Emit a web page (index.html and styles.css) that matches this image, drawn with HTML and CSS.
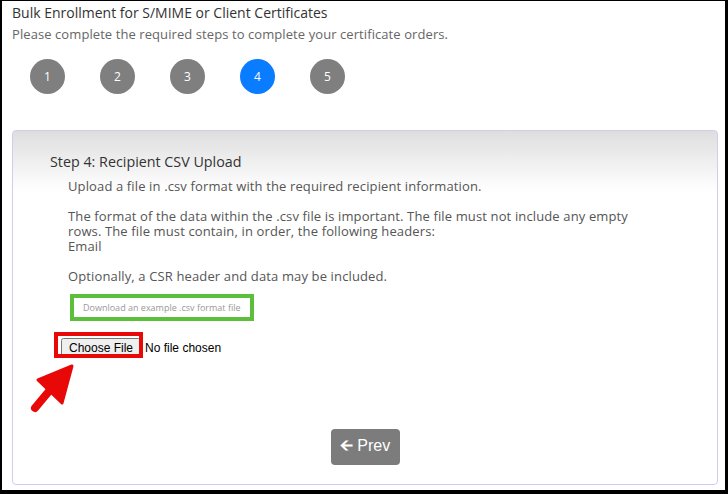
FILE: index.html
```html
<!DOCTYPE html>
<html lang="en">
<head>
	<meta charset="UTF-8">
	<title>Bulk Enrollment</title>
	<link rel="stylesheet" href="styles.css">
</head>
<body>
	<div class="frame">
		<h1 class="title">Bulk Enrollment for S/MIME or Client Certificates</h1>
		<p class="subtitle">Please complete the required steps to complete your certificate orders.</p>
		<ul class="steps">
			<li>1</li>
			<li>2</li>
			<li>3</li>
			<li class="on">4</li>
			<li>5</li>
		</ul>
		<div class="panel">
			<h2 class="step-title">Step 4: Recipient CSV Upload</h2>
			<div class="step-body">
				<p>Upload a file in .csv format with the required recipient information.</p>
				<p>The format of the data within the .csv file is important. The file must not include any empty<br>rows. The file must contain, in order, the following headers:<br>Email</p>
				<p>Optionally, a CSR header and data may be included.</p>
				<a class="sample" href="#">Download an example .csv format file</a>
			</div>
			<div class="upload">
				<input type="file" class="file">
				<span class="mark"></span>
			</div>
			<svg class="pointer" width="46" height="50" viewBox="0 0 46 50">
				<line x1="20" y1="27" x2="5" y2="45" stroke="#e80808" stroke-width="8" stroke-linecap="round"/>
				<polygon points="42,3 8,17 32,40" fill="#e80808" stroke="#e80808" stroke-width="3" stroke-linejoin="round"/>
			</svg>
			<div class="nav">
				<button class="prev"><span class="ico">&#129128;</span> Prev</button>
			</div>
		</div>
	</div>
</body>
</html>
```

FILE: styles.css
```css
*{
	margin: 0;
	padding: 0;
	box-sizing: border-box;
}
body{
	background: #000;
	font-family: "Open Sans", sans-serif;
}
.frame{
	width: 728px;
	height: 494px;
	background: #fff;
	border-style: solid;
	border-color: #000;
	border-width: 1px 3px 4px 2px;
	display: flex;
	flex-direction: column;
}
.title{
	font-size: 14px;
	font-weight: normal;
	line-height: 18px;
	color: #333;
	margin: 3px 0 0 10px;
}
.subtitle{
	font-size: 13px;
	letter-spacing: 0.08px;
	line-height: 18px;
	color: #666;
	margin: 3px 0 0 10px;
}
.steps{
	list-style: none;
	display: flex;
	gap: 35px;
	margin: 16px 0 0 28px;
}
.steps li{
	width: 35px;
	height: 35px;
	border-radius: 50%;
	background: #7f7f7f;
	color: #fff;
	font-size: 12px;
	display: flex;
	align-items: center;
	justify-content: center;
}
.steps li.on{
	background: #0a7cff;
}
.panel{
	flex: 1;
	margin: 36px 7px 5px 10px;
	border: 1px solid #cfcdf6;
	border-radius: 4px;
	background: linear-gradient(#dedede, #fff 60px);
	padding: 22px 0 19px 37px;
	display: flex;
	flex-direction: column;
	position: relative;
}
.step-title{
	font-size: 14.3px;
	font-weight: normal;
	line-height: 18px;
	color: #333;
}
.step-body{
	margin: 8px 0 0 18px;
	font-size: 13px;
	letter-spacing: 0.13px;
	line-height: 15px;
	color: #555;
}
.step-body p{
	margin-bottom: 15px;
}
.sample{
	display: inline-block;
	margin: -8px 0 0 2px;
	border: 4px solid #5cbf3c;
	padding: 0 9px;
	font-size: 9px;
	letter-spacing: 0;
	line-height: 19px;
	color: #999;
	text-decoration: none;
}
.upload{
	position: relative;
	margin: 14px 0 0 11px;
}
.file{
	font-family: "Liberation Sans", Arial, sans-serif;
	font-size: 12px;
	color: #000;
}
.mark{
	position: absolute;
	left: -7px;
	top: -3px;
	width: 89px;
	height: 26px;
	border: 4px solid #e80808;
}
.pointer{
	position: absolute;
	left: 17px;
	top: 232px;
}
.nav{
	margin-top: auto;
	display: flex;
	justify-content: center;
	margin-left: -37px;
}
.prev{
	width: 69px;
	height: 36px;
	border: 0;
	border-radius: 4px;
	background: #7c7c7c;
	color: #fff;
	font-family: "Liberation Sans", Arial, sans-serif;
	font-size: 16px;
}
.prev .ico{
	font-family: "DejaVu Sans", sans-serif;
	font-weight: bold;
}
```
